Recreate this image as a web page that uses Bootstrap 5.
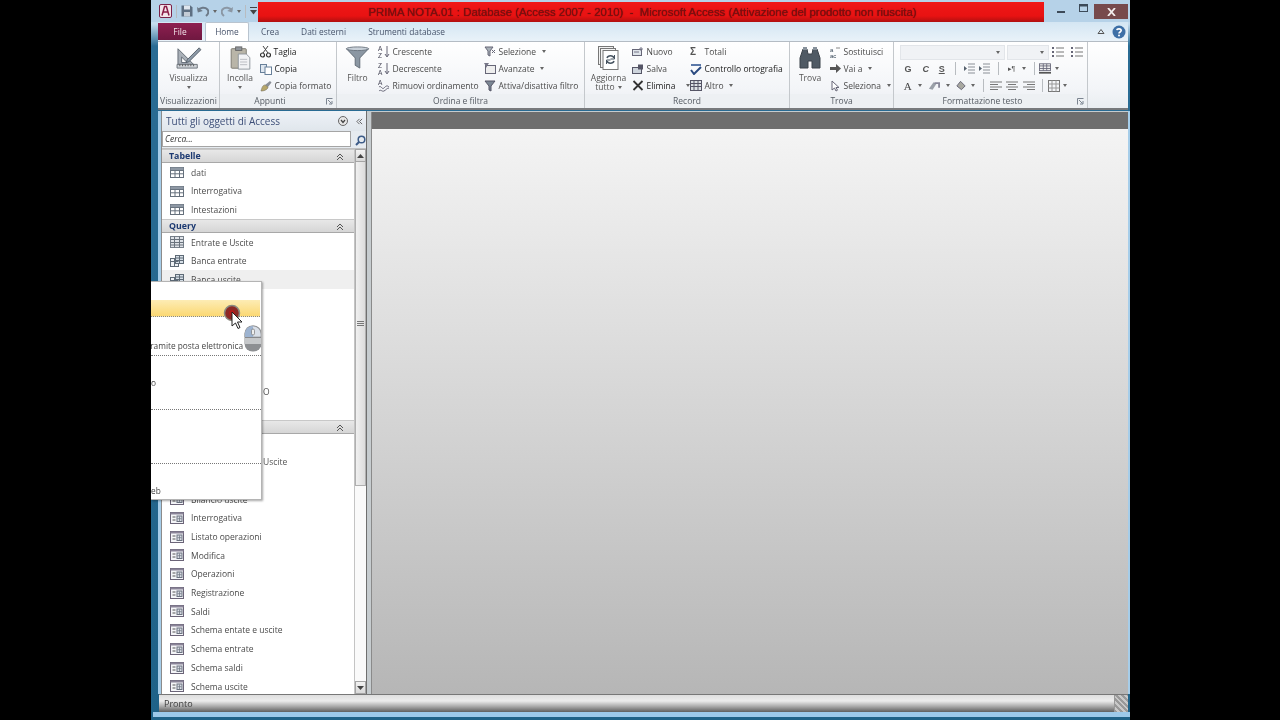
<!DOCTYPE html>
<html lang="it">

<head>
    <meta charset="UTF-8" />
    <meta name="viewport" content="width=device-width, initial-scale=1.0" />
    <title>PRIMA NOTA.01 - Microsoft Access</title>
    <link href="https://cdn.jsdelivr.net/npm/bootstrap@5.3.3/dist/css/bootstrap.min.css" rel="stylesheet" />
    <style>
        html, body { height: 720px; overflow: hidden; background: #000; }
        body { font-family: "Open Sans", "Liberation Sans", sans-serif; font-size: 8.5px; color: #4a4a4a; line-height: 1.1; }
        svg { display: block; flex: none; }
        .ax-fix { flex: none; }

        .ax-win { position: relative; width: 979px; height: 720px; margin-left: 151px; overflow: hidden;
            background: linear-gradient(#bcd6ea 0, #c4dcee 24px, #2a6c94 46px, #1f6288 100%); filter: blur(.3px); }

        /* barra del titolo */
        .ax-title { height: 22px; padding-left: 8px; background: #b6d2e8; }
        .ax-qat { width: 99px; gap: 4px; }
        .ax-redbar { width: 786px; height: 20px; margin-top: 2px; padding-right: 17px; background: linear-gradient(#f01818, #e81212 70%, #b01010);
            color: #7c1010; font: 11.4px "Liberation Sans", sans-serif; text-shadow: 0 0 1px #5a0a0a; }
        .ax-winbtns { flex: 1; padding: 0 2px 0 13px; }
        .ax-maxbtn { margin-left: 14px; }
        .ax-close { width: 34px; height: 15px; background: #774a4c; margin-left: auto; }

        /* schede */
        .ax-tabs { height: 19px; margin: 0 2px 0 7px; background: linear-gradient(#d4e6f3, #e9f2f9); font-size: 8.4px; position: relative; }
        .ax-tab { height: 19px; color: #47536a; margin-right: 22px; }
        .ax-file { width: 44px; height: 17px; margin-top: 1px; background: linear-gradient(#8e1f50, #6f1840); color: #f2e4ea; }
        .ax-home { width: 44px; margin: 0 12px 0 3px; background: #fff; border: 1px solid #b9c4cf; border-bottom: 0; border-radius: 2px 2px 0 0; }
        .ax-tabtools { margin-left: auto; padding-right: 2px; gap: 7px; }

        /* barra multifunzione */
        .ax-ribbon { height: 69px; margin: 0 2px 0 7px; background: linear-gradient(#fff, #f3f5f8 70%, #e9edf1); border-top: 1px solid #b4bcc4; border-bottom: 2px solid #77797c; }
        .ax-group { border-right: 1px solid #c4c8cc; height: 100%; }
        .ax-gview { width: 62px; }
        .ax-gclip { width: 117px; }
        .ax-gsort { width: 248px; }
        .ax-grec { width: 205px; }
        .ax-gfind { width: 104px; }
        .ax-gfmt { width: 194px; }
        .ax-gbody { flex: 1; min-height: 0; padding-top: 1.5px; }
        .ax-glabel { position: relative; height: 14px; color: #565c64; background: #edf0f3; }
        .ax-launch { position: absolute; right: 3px; top: 4px; }
        .ax-big { align-items: center; color: #555; }
        .ax-w40 { width: 40px; }
        .ax-w41 { width: 41px; }
        .ax-w47 { width: 47px; }
        .ax-w58 { width: 58px; }
        .ax-w106 { width: 106px; }
        .ax-bigicon { height: 26px; margin-top: 2px; margin-bottom: 1px; }
        .ax-line { height: 17.4px; gap: 2.5px; white-space: nowrap; }
        .ax-dark { color: #222; }
        .ax-caret { width: 0; height: 0; border: 2px solid transparent; border-top: 3px solid #666; border-bottom: 0; display: inline-block; margin-left: 3px; vertical-align: middle; }
        .ax-caretb { margin-left: 0; }
        .ax-combo { height: 15px; background: #f0f2f5; border: 1px solid #e2e5e9; margin-top: 1px; padding-right: 4px; }
        .ax-cfont { width: 105px; margin-left: -2px; }
        .ax-csize { width: 42px; }
        .ax-rowa { gap: 2px; }
        .ax-sep { width: 1px; height: 13px; background: #b8bcc0; }
        .ax-fmt { font: bold 9px "Liberation Sans", sans-serif; color: #555; }
        .ax-sigma { width: 12px; font-size: 10px; }
        .ax-para { font-size: 7px; font-weight: 400; }
        .ax-bigA { font: 11px "Liberation Serif", serif; color: #444; }
        .ax-rowb { display: grid; margin-left: -3px; grid-template-columns: 18px 17.5px 14.5px 12.5px 15px 15.5px 13px 13px 11px 10px 12px 12px; justify-items: center; align-items: center; height: 17.4px; }
        .ax-rowc { display: grid; grid-template-columns: 11.5px 13px 14.5px 13.5px 13px 10.5px 10px 15px 18px 15px 12.5px 11.5px 10px; justify-items: center; align-items: center; height: 17.4px; }

        /* contenuto */
        .ax-body { height: 583px; margin: 1px 0 0 7px; border-left: 3px solid #a6cde9; border-right: 2px solid #a6cde9; background: #c6cccf; }
        .ax-pane { width: 206px; height: 583px; background: #fff; border-right: 1px solid #6f6f6f; border-left: 1px solid #8b8b8b; }
        .ax-panehead { height: 20px; padding: 0 3px 0 4px; background: linear-gradient(#eef2f7, #e0e6ec); color: #3d4f78; font-size: 10px; }
        .ax-search { height: 18px; background: #e6ebf0; border-bottom: 1px solid #c0c0c0; }
        .ax-searchbox { width: 191px; height: 16px; border: 1px solid #a5a5a5; background: #fff; padding-left: 2px; font-style: italic; color: #333; }
        .ax-navwrap { flex: 1; min-height: 0; }
        .ax-list { width: 193px; overflow: hidden; height: 100%; }
        .ax-sect { height: 14px; flex: none; padding: 2px 10px 0 7px; background: linear-gradient(#e8e8e8, #d6d6d6); border-top: 1px solid #c8c8c8; border-bottom: 1px solid #a8a8a8; color: #1d3a72; font-weight: 700; font-size: 8.8px; }
        .ax-row { height: 18.7px; flex: none; padding-left: 8px; gap: 7px; }
        .ax-row.ax-hover { background: #efefef; }
        .ax-behind { padding-left: 101px; color: #555; }
        .ax-scroll { width: 12px; height: 100%; background: #fafafa; border-left: 1px solid #c4c4c4; }
        .ax-sbtn { height: 13px; flex: none; background: linear-gradient(#f2f2f2, #d8d8d8); border: 1px solid #a4a4a4; }
        .ax-thumb { height: 324px; flex: none; background: linear-gradient(90deg, #f0f0f0, #dcdcdc); border: 1px solid #b0b0b0; border-top: 0; }
        .ax-main { flex: 1; margin: 1px 0 0 4px; height: 582px; border-left: 1px solid #8a8a8a; }
        .ax-darkbar { height: 17px; background: #6e6e6e; }
        .ax-canvas { flex: 1; background: linear-gradient(#f4f4f4, #b6b6b6); }

        /* barra di stato */
        .ax-status { height: 18px; margin: 0 2px 0 8px; padding-left: 5px; background: linear-gradient(#dedede, #ececec 35%, #a8a8a8 68%, #5f5f5f 100%); border-top: 1px solid #777; color: #3c3c3c; font-size: 9px; position: relative; }
        .ax-grip { width: 14px; height: 100%; margin-left: auto; border-left: 1px solid #999; background: repeating-linear-gradient(45deg, #999 0 2px, #c8c8c8 2px 4px); }
        .ax-foot1 { height: 5px; margin-left: 2px; background: #9cc9ea; }

        /* menu sopra il riquadro */
        .ax-menu { position: absolute; left: 0; top: 281px; width: 111px; height: 219px; background: #fff; border: 1px solid #b4b4b4; border-left: 0; box-shadow: 1px 1px 2px rgba(0,0,0,.35); overflow: hidden; color: #444; font-size: 8.3px; }
        .ax-mitem { border-bottom: 1px dotted #777; white-space: nowrap; }
        .ax-myellow { height: 17px; margin: 18px 1px 0 0; background: linear-gradient(#fdecb4, #fbd873); border-bottom: 1px dotted #888; }
        .ax-mmail { height: 39px; padding: 0 18px 5px 0; }
        .ax-mblock { height: 54px; }
        .ax-mlast { padding-bottom: 4px; }
        .ax-cursor { position: absolute; left: 72px; top: 21px; }
        .ax-mouse { position: absolute; left: 93px; top: 43px; }
    </style>
</head>

<body>
    <svg width="0" height="0" class="position-absolute">
        <symbol id="i-table" viewBox="0 0 14 11"><rect x=".5" y=".5" width="13" height="10" fill="#fff" stroke="#66707c" /><path d="M.5 3.5h13M.5 6.8h13M5 .5v10M9.5 .5v10" stroke="#66707c" fill="none" /><rect x=".5" y=".5" width="13" height="2.6" fill="#8e98a4" /></symbol>
        <symbol id="i-query" viewBox="0 0 14 12"><rect x=".5" y="3.5" width="8" height="8" fill="#eef1f4" stroke="#5e6a76" /><rect x="5.5" y=".5" width="8" height="8" fill="#d7e0e8" stroke="#5e6a76" /><path d="M5.5 3h8M5.5 5.5h8M9.5 .5v8M.5 6.5h8M4.5 3.5v8" stroke="#5e6a76" fill="none" /></symbol>
        <symbol id="i-qtable" viewBox="0 0 14 12"><rect x=".5" y=".5" width="13" height="11" fill="#dfe3e8" stroke="#77808a" /><path d="M.5 3.5h13M.5 6.5h13M.5 9h13M4.5 .5v11M9.5 .5v11" stroke="#6a737d" fill="none" /></symbol>
        <symbol id="i-form" viewBox="0 0 14 12"><rect x=".5" y=".5" width="13" height="11" fill="#f4f5f8" stroke="#6b6478" /><rect x=".5" y=".5" width="13" height="2" fill="#8a8498" /><path d="M2.5 5h3M2.5 8h3" stroke="#555" /><rect x="7" y="4" width="5" height="5.5" fill="#d9dde4" stroke="#6b7280" /><path d="M7.5 6.7h4M9.5 4.5v5" stroke="#6b7280" stroke-width=".7" /></symbol>
        <symbol id="i-chev" viewBox="0 0 8 8"><path d="M1 4l3-3 3 3M1 7l3-3 3 3" fill="none" stroke="#555" /></symbol>
        <symbol id="i-launch" viewBox="0 0 7 7"><path d="M.5 6.5v-6h6M2 2l3.5 3.5M6 3v3H3" fill="none" stroke="#7b8490" /></symbol>
        <symbol id="i-lines" viewBox="0 0 13 12"><path d="M5 2h8M5 6h8M5 10h8" stroke="#777" /><path d="M1 1h2v2H1zM1 5h2v2H1zM1 9h2v2H1z" fill="#667" /></symbol>
        <symbol id="i-indent" viewBox="0 0 11 11"><path d="M4 1h7M4 4h7M4 7h7M4 10h7" stroke="#8a8f96" /><path d="M0 3l3 2.5L0 8z" fill="#55606c" /></symbol>
    </svg>

    <div class="ax-win d-flex flex-column">
        <!-- titolo -->
        <div class="ax-title d-flex ax-fix">
            <div class="ax-qat d-flex align-items-center">
                <svg width="13" height="14" viewBox="0 0 13 14"><rect x=".5" y=".5" width="12" height="13" rx="1.5" fill="#f3e3ea" stroke="#7a2148" /><path d="M3 11.5l2.6-9h1.8l2.6 9M4.2 8h4.6" fill="none" stroke="#8a1b46" stroke-width="1.5" /></svg>
                <span class="ax-sep"></span>
                <svg width="12" height="12" viewBox="0 0 12 12"><path d="M.5.5h9l2 2v9h-11z" fill="#5d6f82" /><rect x="3" y=".5" width="6" height="4" fill="#dfe6ee" /><rect x="3" y="7" width="6" height="4.5" fill="#c3ccd6" /></svg>
                <svg width="12" height="11" viewBox="0 0 12 11"><path d="M1 4.5C3 1.5 8 .8 10.5 3.5c1.5 2 .8 4.5-1.5 6.5" fill="none" stroke="#6d7a88" stroke-width="2" /><path d="M0 1l.8 5.5 5-1.5z" fill="#6d7a88" /></svg>
                <span class="ax-caret ax-caretb"></span>
                <svg width="12" height="11" viewBox="0 0 12 11"><path d="M11 4.500C9 1.500 4 .8 1.500 3.500 0 5.500 .7 8 3 10" fill="none" stroke="#8b97a4" stroke-width="2" /><path d="M12 1l-.8 5.500-5-1.500z" fill="#8b97a4" /></svg>
                <span class="ax-caret ax-caretb"></span>
                <span class="ax-sep"></span>
                <svg width="7" height="8" viewBox="0 0 7 8"><path d="M0 .5h7" stroke="#444" /><path d="M0 3h7L3.5 7.5z" fill="#444" /></svg>
            </div>
            <div class="ax-redbar d-flex align-items-center justify-content-center">PRIMA NOTA.01 : Database (Access 2007 - 2010)&nbsp; - &nbsp;Microsoft Access (Attivazione del prodotto non riuscita)</div>
            <div class="ax-winbtns d-flex align-items-start">
                <svg width="8" height="10" viewBox="0 0 8 10" class="mt-1"><path d="M0 8h8" stroke="#3c4a58" stroke-width="2" /></svg>
                <svg width="9" height="8" viewBox="0 0 9 8" class="mt-1 ax-maxbtn"><rect x=".5" y=".5" width="8" height="7" fill="none" stroke="#3c4a58" /><path d="M0 1.5h9" stroke="#3c4a58" stroke-width="2" /></svg>
                <div class="ax-close d-flex align-items-center justify-content-center mt-1">
                    <svg width="9" height="8" viewBox="0 0 9 8"><path d="M1 0l7 8M8 0L1 8" stroke="#f4eeee" stroke-width="1.8" /></svg>
                </div>
            </div>
        </div>

        <!-- schede -->
        <div class="ax-tabs d-flex ax-fix">
            <div class="ax-file d-flex align-items-center justify-content-center">File</div>
            <div class="ax-tab ax-home d-flex align-items-center justify-content-center">Home</div>
            <div class="ax-tab d-flex align-items-center">Crea</div>
            <div class="ax-tab d-flex align-items-center">Dati esterni</div>
            <div class="ax-tab d-flex align-items-center">Strumenti database</div>
            <div class="ax-tabtools d-flex align-items-center">
                <svg width="8" height="7" viewBox="0 0 8 7"><path d="M1 5.5l3-4 3 4z" fill="none" stroke="#555" /></svg>
                <svg width="14" height="14" viewBox="0 0 14 14"><circle cx="7" cy="7" r="6.5" fill="#3d6fa6" /><path d="M4.8 5.2C5 3.400 9.200 3.400 9.200 5.500 9.200 7 7 7 7 8.600" fill="none" stroke="#fff" stroke-width="1.6" /><circle cx="7" cy="10.600" r="1" fill="#fff" /></svg>
            </div>
        </div>

        <!-- barra multifunzione -->
        <div class="ax-ribbon d-flex ax-fix">
            <div class="ax-group ax-gview d-flex flex-column">
                <div class="ax-gbody d-flex justify-content-center">
                    <div class="ax-big d-flex flex-column">
                        <div class="ax-bigicon"><svg width="28" height="23" viewBox="0 0 28 25"><path d="M2 3l17 17H2z" fill="#a9b0b8" stroke="#5e6670" /><path d="M6 12l6 6H6z" fill="#fff" stroke="#5e6670" /><path d="M12 15L25 2l2 2-13 13-3 1z" fill="#8d9aa8" stroke="#56606a" /><path d="M1 20h22v4H1z" fill="#cfd3d8" stroke="#6a7078" /><path d="M4 20v2M7 20v2M10 20v2M13 20v2M16 20v2M19 20v2" stroke="#555" /></svg></div>
                        <div>Visualizza</div>
                        <span class="ax-caret mt-1 ms-0"></span>
                    </div>
                </div>
                <div class="ax-glabel d-flex align-items-center justify-content-center">Visualizzazioni</div>
            </div>

            <div class="ax-group ax-gclip d-flex flex-column">
                <div class="ax-gbody d-flex">
                    <div class="ax-big ax-w40 d-flex flex-column">
                        <div class="ax-bigicon"><svg width="21" height="24" viewBox="0 0 23 27"><rect x="1" y="3" width="17" height="22" rx="1" fill="#b9b5a8" stroke="#77746a" /><rect x="6" y="1" width="7" height="4" fill="#8f949a" stroke="#666" /><path d="M9 9h9l4 4v13H9z" fill="#f2f3f5" stroke="#8a9098" /><path d="M11 15h8M11 18h8M11 21h8" stroke="#b4b8bd" /></svg></div>
                        <div>Incolla</div>
                        <span class="ax-caret mt-1 ms-0"></span>
                    </div>
                    <div class="d-flex flex-column">
                        <div class="ax-line d-flex align-items-center ax-dark"><svg width="11" height="13" viewBox="0 0 11 13"><path d="M3 1l5 7M8 1L3 8" stroke="#444" /><circle cx="2.5" cy="10" r="2" fill="none" stroke="#333" stroke-width="1.2" /><circle cx="8.5" cy="10" r="2" fill="none" stroke="#333" stroke-width="1.2" /></svg>Taglia</div>
                        <div class="ax-line d-flex align-items-center ax-dark"><svg width="12" height="12" viewBox="0 0 12 12"><rect x=".5" y="1.5" width="6" height="8" fill="#dfe7f0" stroke="#68809a" /><rect x="5" y="4" width="6.5" height="7.5" fill="#fff" stroke="#68809a" /></svg>Copia</div>
                        <div class="ax-line d-flex align-items-center"><svg width="12" height="12" viewBox="0 0 12 12"><path d="M5 5l5-4 1.5 1.5L8 7z" fill="#8a8f96" /><path d="M1 11c1-4 2-6 4-6l3 2c0 2-3 4-7 4z" fill="#b7a76a" stroke="#77705a" stroke-width=".6" /></svg>Copia formato</div>
                    </div>
                </div>
                <div class="ax-glabel d-flex align-items-center justify-content-center pe-3">Appunti<span class="ax-launch"><svg width="7" height="7"><use href="#i-launch" /></svg></span></div>
            </div>

            <div class="ax-group ax-gsort d-flex flex-column">
                <div class="ax-gbody d-flex">
                    <div class="ax-big ax-w41 d-flex flex-column">
                        <div class="ax-bigicon"><svg width="25" height="23" viewBox="0 0 25 25"><path d="M.5 3h24L15 13v11l-5-3v-8z" fill="#8b97a3" stroke="#5e6872" /><ellipse cx="12.5" cy="3" rx="12" ry="2" fill="#c8d0d8" stroke="#6a747e" /></svg></div>
                        <div>Filtro</div>
                    </div>
                    <div class="ax-w106 d-flex flex-column">
                        <div class="ax-line d-flex align-items-center"><svg width="12" height="13" viewBox="0 0 12 13"><text x="0" y="6" font-size="6.5" font-family="Liberation Sans" fill="#445">A</text><text x="0" y="13" font-size="6.5" font-family="Liberation Sans" fill="#445">Z</text><path d="M9 1v10M7 9l2 3 2-3" fill="none" stroke="#667" /></svg>Crescente</div>
                        <div class="ax-line d-flex align-items-center"><svg width="12" height="13" viewBox="0 0 12 13"><text x="0" y="6" font-size="6.5" font-family="Liberation Sans" fill="#445">Z</text><text x="0" y="13" font-size="6.5" font-family="Liberation Sans" fill="#445">A</text><path d="M9 1v10M7 9l2 3 2-3" fill="none" stroke="#667" /></svg>Decrescente</div>
                        <div class="ax-line d-flex align-items-center"><svg width="12" height="13" viewBox="0 0 12 13"><text x="0" y="6" font-size="6.5" font-family="Liberation Sans" fill="#445">A</text><path d="M1 8c2-2 3 3 5 1s3-3 5-1M1 12c2-2 3 1 5 0s3-3 5-3" fill="none" stroke="#667" /></svg>Rimuovi ordinamento</div>
                    </div>
                    <div class="d-flex flex-column">
                        <div class="ax-line d-flex align-items-center"><svg width="12" height="12" viewBox="0 0 12 12"><path d="M1 1h8L6 5v5L4 9V5z" fill="#a8b0b8" stroke="#667" /><path d="M8 7l3-3M8 4l3 3" stroke="#667" /></svg>Selezione<span class="ax-caret"></span></div>
                        <div class="ax-line d-flex align-items-center"><svg width="12" height="12" viewBox="0 0 12 12"><rect x="1.5" y="2.5" width="10" height="8" fill="#eee" stroke="#667" /><path d="M0 0h5L3 3v2z" fill="#778" /></svg>Avanzate<span class="ax-caret"></span></div>
                        <div class="ax-line d-flex align-items-center"><svg width="12" height="12" viewBox="0 0 12 12"><path d="M1 1h10L7 6v5L5 10V6z" fill="#7b8794" stroke="#556" /></svg>Attiva/disattiva filtro</div>
                    </div>
                </div>
                <div class="ax-glabel d-flex align-items-center justify-content-center">Ordina e filtra</div>
            </div>

            <div class="ax-group ax-grec d-flex flex-column">
                <div class="ax-gbody d-flex">
                    <div class="ax-big ax-w47 d-flex flex-column text-center">
                        <div class="ax-bigicon"><svg width="21" height="24" viewBox="0 0 21 24"><rect x=".5" y=".5" width="15" height="18" fill="#f2f2f2" stroke="#777" /><rect x="2.5" y="2.5" width="15" height="19" fill="#f5f5f5" stroke="#777" /><rect x="5" y="4.5" width="15" height="19" fill="#fff" stroke="#777" /><path d="M9 12c1-3 6-3 7 0M16 15c-1 3-6 3-7 0" fill="none" stroke="#45525f" stroke-width="1.5" /><path d="M16.500 9v4h-4M8.500 18v-4h4" fill="none" stroke="#45525f" /></svg></div>
                        <div>Aggiorna<br />tutto<span class="ax-caret"></span></div>
                    </div>
                    <div class="ax-w58 d-flex flex-column">
                        <div class="ax-line d-flex align-items-center"><svg width="12" height="10" viewBox="0 0 12 10"><rect x=".5" y="2.5" width="9" height="6" fill="#dfe4ea" stroke="#667" /><path d="M2 5h5M9 0v4M7 2h4" stroke="#778" /></svg>Nuovo</div>
                        <div class="ax-line d-flex align-items-center"><svg width="12" height="10" viewBox="0 0 12 10"><rect x=".5" y="3.5" width="9" height="6" fill="#cdd4dc" stroke="#556" /><rect x="6" y=".5" width="5" height="5" fill="#556" /></svg>Salva</div>
                        <div class="ax-line d-flex align-items-center ax-dark"><svg width="12" height="11" viewBox="0 0 12 11"><path d="M1.5 1l9 9M10.500 1l-9 9" stroke="#333" stroke-width="1.8" /></svg>Elimina<span class="ax-caret ms-2"></span></div>
                    </div>
                    <div class="d-flex flex-column">
                        <div class="ax-line d-flex align-items-center"><span class="ax-fmt ax-sigma">Σ</span>Totali</div>
                        <div class="ax-line d-flex align-items-center ax-dark"><svg width="12" height="12" viewBox="0 0 12 12"><path d="M1 2h10" stroke="#5a78a8" stroke-width="2" /><path d="M1 7l3 4 7-7" fill="none" stroke="#2a4a80" stroke-width="2" /></svg>Controllo ortografia</div>
                        <div class="ax-line d-flex align-items-center"><svg width="12" height="11" viewBox="0 0 12 11"><rect x=".5" y=".5" width="11" height="10" fill="#dde1e6" stroke="#556" /><path d="M.5 3.5h11M.5 6.5h11M4 .5v10M8 .5v10" stroke="#556" /></svg>Altro<span class="ax-caret"></span></div>
                    </div>
                </div>
                <div class="ax-glabel d-flex align-items-center justify-content-center">Record</div>
            </div>

            <div class="ax-group ax-gfind d-flex flex-column">
                <div class="ax-gbody d-flex">
                    <div class="ax-big ax-w40 d-flex flex-column">
                        <div class="ax-bigicon"><svg width="22" height="23" viewBox="0 0 22 23"><path d="M1 12l3-9h4l1 5h4l1-5h4l3 9v10h-8v-7h-4v7H1z" fill="#4f5a64" stroke="#3a424a" /><rect x="4" y="1" width="4" height="3" fill="#87919b" /><rect x="14" y="1" width="4" height="3" fill="#87919b" /></svg></div>
                        <div>Trova</div>
                    </div>
                    <div class="d-flex flex-column">
                        <div class="ax-line d-flex align-items-center"><svg width="11" height="12" viewBox="0 0 11 12"><text x="0" y="6" font-size="6" font-family="Liberation Sans" fill="#345">a</text><text x="0" y="12" font-size="6" font-family="Liberation Sans" fill="#345">ac</text><path d="M6 2h4" stroke="#888" /></svg>Sostituisci</div>
                        <div class="ax-line d-flex align-items-center"><svg width="11" height="9" viewBox="0 0 11 9"><path d="M0 3h6V0l5 4.5L6 9V6H0z" fill="#555" /></svg>Vai a<span class="ax-caret"></span></div>
                        <div class="ax-line d-flex align-items-center"><svg width="11" height="12" viewBox="0 0 11 12"><path d="M2 1v9l2.5-2L6 11l1.5-.8L6 7.5h3z" fill="#fff" stroke="#667" /></svg>Seleziona<span class="ax-caret"></span></div>
                    </div>
                </div>
                <div class="ax-glabel d-flex align-items-center justify-content-center">Trova</div>
            </div>

            <div class="ax-group ax-gfmt d-flex flex-column">
                <div class="ax-gbody d-flex flex-column ps-2">
                    <div class="ax-line ax-rowa d-flex align-items-center">
                        <div class="ax-combo ax-cfont d-flex align-items-center justify-content-end"><span class="ax-caret"></span></div>
                        <div class="ax-combo ax-csize d-flex align-items-center justify-content-end"><span class="ax-caret"></span></div>
                        <svg width="13" height="12"><use href="#i-lines" /></svg>
                        <svg width="13" height="12" class="ms-1"><use href="#i-lines" /></svg>
                    </div>
                    <div class="ax-rowb ax-fmt">
                        <span>G</span><span class="fst-italic">C</span><span class="text-decoration-underline">S</span><span class="ax-sep"></span>
                        <svg width="11" height="11"><use href="#i-indent" /></svg><svg width="11" height="11"><use href="#i-indent" /></svg><span class="ax-sep"></span>
                        <span class="ax-para">▸¶</span><span class="ax-caret ax-caretb"></span><span class="ax-sep"></span>
                        <svg width="12" height="11" viewBox="0 0 14 12"><rect x=".5" y=".5" width="13" height="8" fill="#eee" stroke="#667" /><path d="M.5 3h13M.5 6h13M5 .5v8M9 .5v8" stroke="#667" /><path d="M0 11h14" stroke="#555" stroke-width="2" /></svg><span class="ax-caret ax-caretb"></span>
                    </div>
                    <div class="ax-rowc">
                        <span class="ax-bigA">A</span><span class="ax-caret ax-caretb"></span>
                        <svg width="12" height="11" viewBox="0 0 13 11"><path d="M1 9l5-7 3 2-4 6z" fill="#9aa0a8" /><path d="M7 3h5v5" fill="none" stroke="#889" stroke-width="2" /></svg><span class="ax-caret ax-caretb"></span>
                        <svg width="12" height="11" viewBox="0 0 13 11"><path d="M2 6l4-5 5 5-4 4z" fill="#a8a8a0" stroke="#667" /></svg><span class="ax-caret ax-caretb"></span><span class="ax-sep"></span>
                        <svg width="12" height="10" viewBox="0 0 12 10"><path d="M0 1h12M0 3.5h8M0 6h12M0 8.5h8" stroke="#777" /></svg>
                        <svg width="12" height="10" viewBox="0 0 12 10"><path d="M0 1h12M2 3.5h8M0 6h12M2 8.5h8" stroke="#777" /></svg>
                        <svg width="12" height="10" viewBox="0 0 12 10"><path d="M0 1h12M4 3.5h8M0 6h12M4 8.5h8" stroke="#777" /></svg><span class="ax-sep"></span>
                        <svg width="12" height="12" viewBox="0 0 12 12"><rect x=".5" y=".5" width="11" height="11" fill="none" stroke="#777" /><path d="M.5 4h11M.5 8h11M4 .5v11M8 .5v11" stroke="#999" /></svg><span class="ax-caret ax-caretb"></span>
                    </div>
                </div>
                <div class="ax-glabel d-flex align-items-center justify-content-center pe-3">Formattazione testo<span class="ax-launch"><svg width="7" height="7"><use href="#i-launch" /></svg></span></div>
            </div>
        </div>

        <!-- riquadro di spostamento e area di lavoro -->
        <div class="ax-body d-flex ax-fix">
            <div class="ax-pane d-flex flex-column">
                <div class="ax-panehead d-flex align-items-center ax-fix">
                    <span>Tutti gli oggetti di Access</span>
                    <svg width="10" height="10" viewBox="0 0 10 10" class="ms-auto"><circle cx="5" cy="5" r="4.5" fill="#e6e6e6" stroke="#666" /><path d="M3 4l2 2.5L7 4" fill="none" stroke="#444" stroke-width="1.3" /></svg>
                    <svg width="7" height="7" class="ms-2" viewBox="0 0 8 8"><path d="M4 1L1 4l3 3M7 1L4 4l3 3" fill="none" stroke="#555" /></svg>
                </div>
                <div class="ax-search d-flex align-items-start ax-fix">
                    <div class="ax-searchbox d-flex align-items-center">Cerca...</div>
                    <svg width="11" height="11" viewBox="0 0 11 11" class="ms-1 mt-1"><circle cx="6.5" cy="4.5" r="3.3" fill="none" stroke="#3d5c88" stroke-width="1.5" /><path d="M4 7L1 10" stroke="#3d5c88" stroke-width="2" /></svg>
                </div>
                <div class="ax-navwrap d-flex">
                    <div class="ax-list d-flex flex-column">
                        <div class="ax-sect d-flex align-items-center justify-content-between">Tabelle<svg width="8" height="8"><use href="#i-chev" /></svg></div>
                        <div class="ax-row d-flex align-items-center"><svg width="14" height="11"><use href="#i-table" /></svg>dati</div>
                        <div class="ax-row d-flex align-items-center"><svg width="14" height="11"><use href="#i-table" /></svg>Interrogativa</div>
                        <div class="ax-row d-flex align-items-center"><svg width="14" height="11"><use href="#i-table" /></svg>Intestazioni</div>
                        <div class="ax-sect d-flex align-items-center justify-content-between">Query<svg width="8" height="8"><use href="#i-chev" /></svg></div>
                        <div class="ax-row d-flex align-items-center"><svg width="14" height="12"><use href="#i-qtable" /></svg>Entrate e Uscite</div>
                        <div class="ax-row d-flex align-items-center"><svg width="14" height="12"><use href="#i-query" /></svg>Banca entrate</div>
                        <div class="ax-row ax-hover d-flex align-items-center"><svg width="14" height="12"><use href="#i-query" /></svg>Banca uscite</div>
                        <div class="ax-row d-flex align-items-center"></div>
                        <div class="ax-row d-flex align-items-center"></div>
                        <div class="ax-row d-flex align-items-center"></div>
                        <div class="ax-row d-flex align-items-center"></div>
                        <div class="ax-row d-flex align-items-center"></div>
                        <div class="ax-row ax-behind d-flex align-items-center">O</div>
                        <div class="ax-row d-flex align-items-center"></div>
                        <div class="ax-sect d-flex align-items-center justify-content-end"><svg width="8" height="8"><use href="#i-chev" /></svg></div>
                        <div class="ax-row d-flex align-items-center"></div>
                        <div class="ax-row ax-behind d-flex align-items-center">Uscite</div>
                        <div class="ax-row d-flex align-items-center"></div>
                        <div class="ax-row d-flex align-items-center"><svg width="14" height="12"><use href="#i-form" /></svg>Bilancio uscite</div>
                        <div class="ax-row d-flex align-items-center"><svg width="14" height="12"><use href="#i-form" /></svg>Interrogativa</div>
                        <div class="ax-row d-flex align-items-center"><svg width="14" height="12"><use href="#i-form" /></svg>Listato operazioni</div>
                        <div class="ax-row d-flex align-items-center"><svg width="14" height="12"><use href="#i-form" /></svg>Modifica</div>
                        <div class="ax-row d-flex align-items-center"><svg width="14" height="12"><use href="#i-form" /></svg>Operazioni</div>
                        <div class="ax-row d-flex align-items-center"><svg width="14" height="12"><use href="#i-form" /></svg>Registrazione</div>
                        <div class="ax-row d-flex align-items-center"><svg width="14" height="12"><use href="#i-form" /></svg>Saldi</div>
                        <div class="ax-row d-flex align-items-center"><svg width="14" height="12"><use href="#i-form" /></svg>Schema entate e uscite</div>
                        <div class="ax-row d-flex align-items-center"><svg width="14" height="12"><use href="#i-form" /></svg>Schema entrate</div>
                        <div class="ax-row d-flex align-items-center"><svg width="14" height="12"><use href="#i-form" /></svg>Schema saldi</div>
                        <div class="ax-row d-flex align-items-center"><svg width="14" height="12"><use href="#i-form" /></svg>Schema uscite</div>
                    </div>
                    <div class="ax-scroll d-flex flex-column">
                        <div class="ax-sbtn d-flex align-items-center justify-content-center"><svg width="7" height="4" viewBox="0 0 7 4"><path d="M0 4l3.5-4L7 4z" fill="#444" /></svg></div>
                        <div class="ax-thumb d-flex align-items-center justify-content-center"><svg width="7" height="5" viewBox="0 0 7 5"><path d="M0 .5h7M0 2.5h7M0 4.5h7" stroke="#777" /></svg></div>
                        <div class="flex-grow-1"></div>
                        <div class="ax-sbtn d-flex align-items-center justify-content-center"><svg width="7" height="4" viewBox="0 0 7 4"><path d="M0 0l3.5 4L7 0z" fill="#444" /></svg></div>
                    </div>
                </div>
            </div>
            <div class="ax-main d-flex flex-column">
                <div class="ax-darkbar ax-fix"></div>
                <div class="ax-canvas"></div>
            </div>
        </div>

        <!-- stato -->
        <div class="ax-status d-flex align-items-center ax-fix">Pronto<div class="ax-grip"></div></div>
        <div class="ax-foot1 ax-fix"></div>

        <!-- menu contestuale -->
        <div class="ax-menu d-flex flex-column">
            <div class="ax-myellow ax-fix"></div>
            <div class="ax-mitem ax-mmail d-flex align-items-end justify-content-end ax-fix">ramite posta elettronica</div>
            <div class="ax-mitem ax-mblock d-flex align-items-center ax-fix">o</div>
            <div class="ax-mitem ax-mblock ax-fix"></div>
            <div class="ax-mlast d-flex align-items-end flex-grow-1">eb</div>
            <svg class="ax-cursor" width="20" height="26" viewBox="0 0 20 26"><circle cx="9" cy="10" r="7.5" fill="#8c2a26" stroke="#8a8a80" stroke-width="1.5" /><circle cx="9" cy="10" r="3" fill="#b01c1c" /><path d="M9 9v14l3.5-3 2.5 5.5 2-1-2.500-5.500H19z" fill="#fff" stroke="#222" /></svg>
            <svg class="ax-mouse" width="18" height="27" viewBox="0 0 18 27"><rect x=".5" y=".5" width="17" height="26" rx="8" fill="#8d8f92" /><path d="M1 12V9a8 8 0 0 1 8-8 8 8 0 0 1 8 8v3z" fill="#d9dfe8" stroke="#777" stroke-width=".5" /><path d="M1 12V9a8 8 0 0 1 8-8v11z" fill="#9db3d0" /><rect x="7.5" y="4" width="3" height="6" rx="1.5" fill="#eee" stroke="#666" stroke-width=".6" /><path d="M1 13h16v6H1z" fill="#c6c8ca" /></svg>
        </div>
    </div>
</body>

</html>
